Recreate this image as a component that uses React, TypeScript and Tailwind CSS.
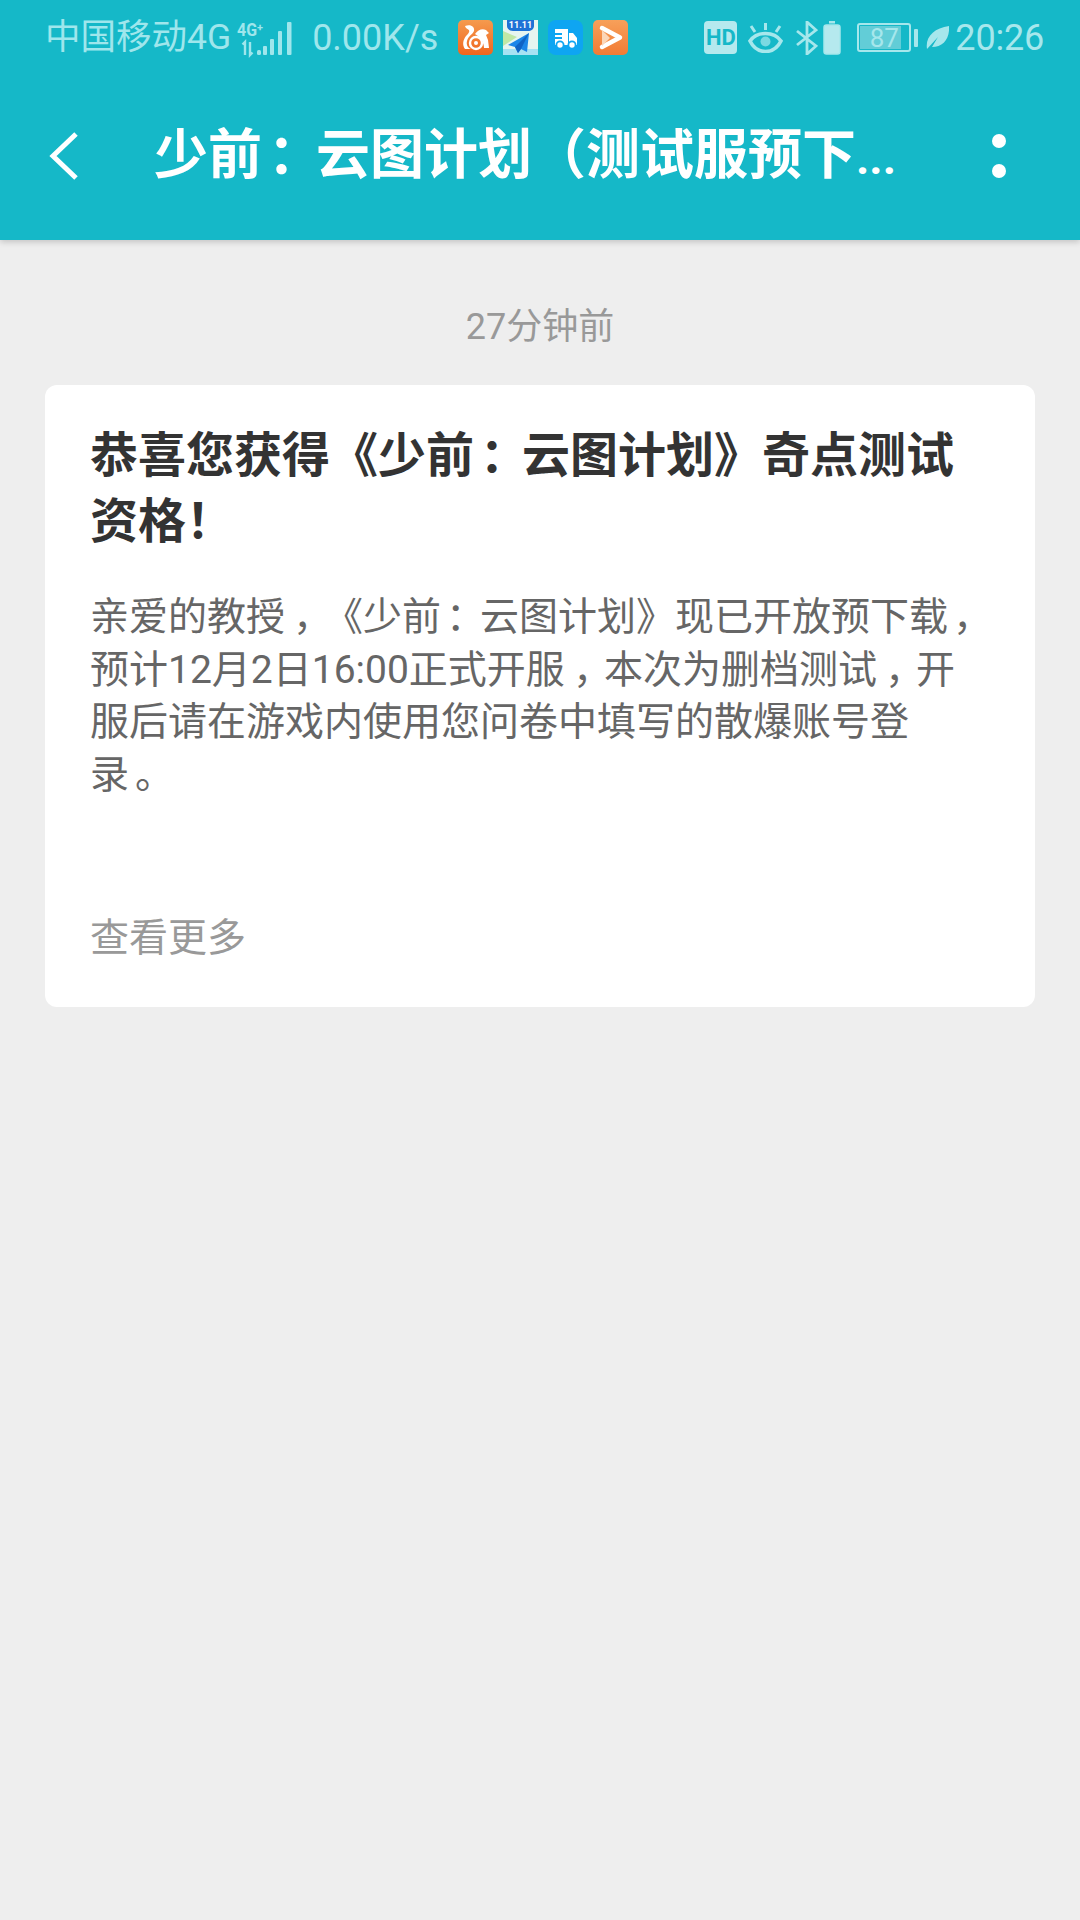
const cjk = "font-['Roboto','Noto_Sans_CJK_SC',sans-serif]"

// half-width glyph in a 1em cell, the reference font sits these marks further right than Noto does
function Mark({ children, className }: { children: string; className: string }) {
  return <span className={`inline-block w-[1em] [font-feature-settings:'halt'] ${className}`}>{children}</span>
}

function SignalIcon() {
  return (
    <svg width="60" height="36" viewBox="0 0 60 36" fill="currentColor" className="overflow-visible">
      <text x="0" y="16" fontSize="18" fontWeight="700" fontFamily="Roboto" textLength="20" lengthAdjust="spacingAndGlyphs">4G</text>
      <text x="20" y="11" fontSize="11" fontWeight="700" fontFamily="Roboto">+</text>
      <path d="M8 35V22l-2.5 2.5M13 22v13l2.5-2.5" fill="none" stroke="currentColor" strokeWidth="2.4" />
      <rect x="20" y="30" width="4" height="5" rx="1.5" />
      <rect x="26" y="26" width="4" height="9" rx="1" />
      <rect x="33" y="19" width="4" height="16" rx="1" />
      <rect x="41" y="11" width="4" height="24" rx="1" />
      <rect x="50" y="2" width="4.5" height="33" rx="1" />
    </svg>
  )
}

function UcIcon() {
  return (
    <svg width="35" height="35" viewBox="0 0 35 35">
      <defs>
        <linearGradient id="uc" x1="0" y1="0" x2="0" y2="1">
          <stop offset="0" stopColor="#f59a4e" />
          <stop offset="1" stopColor="#f0661e" />
        </linearGradient>
      </defs>
      <rect width="35" height="35" rx="5" fill="url(#uc)" />
      <path d="M7 6c6-2 10 1 9 5-1 3-6 5-7 10-1 4 1 7 4 8H7c-3-4-2-9 1-13 2-2 4-4 3-6-1-1-3-1-4-4z" fill="#fff" />
      <circle cx="18" cy="23" r="6" fill="none" stroke="#fff" strokeWidth="2.4" />
      <circle cx="18" cy="23" r="2" fill="#fff" />
      <path d="M17 14c3-4 7-6 11-4l3 3-3 2 2 5 1 8h-5c0-6-4-11-9-14z" fill="#fff" />
    </svg>
  )
}

function MapIcon() {
  return (
    <svg width="35" height="35" viewBox="0 0 35 35">
      <rect width="35" height="35" fill="#e6f5f0" />
      <path d="M4 0h27v6c0 3-3 5-6 5H10c-3 0-6-2-6-5z" fill="#1f72d6" />
      <text x="17.5" y="8" textAnchor="middle" fontSize="9" fontWeight="700" fill="#fff" fontFamily="Roboto">11.11</text>
      <path d="M0 11l14 6L0 26z" fill="#bfe8a6" />
      <rect y="29" width="35" height="6" fill="#a6e2f3" />
      <path d="M26 13L5 25l7 2 3 6 3-4 6 3z" fill="#1b86e8" />
      <path d="M26 13L12 27l3 6 3-4z" fill="#0f63c4" />
    </svg>
  )
}

function TruckIcon() {
  return (
    <svg width="35" height="35" viewBox="0 0 35 35">
      <rect width="35" height="35" rx="8" fill="#0ea5f2" />
      <path d="M7 9h13v16H7zM21 13h4l4 5v7h-8z" fill="#fff" />
      <path d="M5 14h9M7 18h7" stroke="#0ea5f2" strokeWidth="2" />
      <circle cx="12" cy="25" r="3.6" fill="#fff" stroke="#0ea5f2" strokeWidth="1.8" />
      <circle cx="24" cy="25" r="3.6" fill="#fff" stroke="#0ea5f2" strokeWidth="1.8" />
    </svg>
  )
}

function PlayIcon() {
  return (
    <svg width="35" height="35" viewBox="0 0 35 35">
      <defs>
        <linearGradient id="pl" x1="0" y1="0" x2="0" y2="1">
          <stop offset="0" stopColor="#f7a05a" />
          <stop offset="1" stopColor="#f27b34" />
        </linearGradient>
      </defs>
      <rect width="35" height="35" rx="5" fill="url(#pl)" />
      <path d="M9 8l18 9.5L9 27" fill="none" stroke="#fff" strokeWidth="4.5" strokeLinejoin="round" strokeLinecap="round" />
      <path d="M9 10v16l8-8z" fill="#fbd6b8" />
    </svg>
  )
}

function StatusRight() {
  return (
    <div className="flex items-center text-[#a6e7ec]">
      <div className="w-[33px] h-[33px] rounded-[4px] bg-[#b5e9ee] text-[#15b8c8] text-[22px] font-bold flex items-center justify-center leading-none">
        HD
      </div>
      <svg width="37" height="30" viewBox="0 0 37 30" fill="none" stroke="currentColor" strokeWidth="3.6" className="ml-[10px]">
        <path d="M3 18c7-10 24-10 31 0-7 14-24 14-31 0z" />
        <circle cx="18.5" cy="18.5" r="5" fill="currentColor" fillOpacity="0.7" stroke="none" />
        <path d="M18.5 0v7M4 3l4 6M33 3l-4 6" strokeWidth="3" />
      </svg>
      <svg width="22" height="34" viewBox="0 0 22 34" fill="none" stroke="currentColor" strokeWidth="2.8" className="ml-[12px]">
        <path d="M1 10l19 15-9 8V1l9 8L1 24" />
      </svg>
      <svg width="18" height="34" viewBox="0 0 18 34" className="ml-[5px]">
        <rect x="6" y="0" width="6" height="2.5" fill="currentColor" />
        <rect x="1" y="4" width="16" height="29" rx="2.5" fill="#b5e9ee" stroke="currentColor" strokeWidth="1.5" />
      </svg>
      <div className="ml-[16px] flex items-center">
        <div className="relative w-[54px] h-[29px] rounded-[3px] border-2 border-[#a6e7ec] text-[26px] leading-none flex items-center justify-center">
          <div className="absolute left-[1px] top-[1px] bottom-[1px] w-[41px] bg-[#62cdd7]" />
          <span className="relative">87</span>
        </div>
        <div className="ml-[3px] w-[4px] h-[18px] rounded-[1px] bg-[#a6e7ec]" />
      </div>
      <svg width="23" height="24" viewBox="0 0 23 24" fill="currentColor" className="ml-[8px]">
        <path d="M1 23C-1 11 8 2 23 0c1 13-6 21-17 21l6-10z" />
      </svg>
      <span className="ml-[6px] text-[36px] leading-none tracking-[-0.2px]">20:26</span>
    </div>
  )
}

export default function App() {
  return (
    <div className={`w-[1080px] h-[1920px] bg-[#eeeeee] [text-spacing-trim:space-all] ${cjk}`}>
      <header className="h-[240px] bg-[#15b8c8] shadow-[0_2px_6px_rgba(0,0,0,0.18)] relative">
        <div className="h-[72px] pt-[3px] pl-[45px] pr-[36px] flex items-center justify-between">
          <div className="flex items-center text-[#9fe6ec]">
            <span className="text-[35.5px] leading-none">中国移动4G</span>
            <span className="ml-[6px] text-[#9fe6ec]"><SignalIcon /></span>
            <span className="ml-[15px] text-[36px] leading-none">0.00K/s</span>
            <div className="ml-[20px] flex items-center gap-[10px]">
              <UcIcon />
              <MapIcon />
              <TruckIcon />
              <PlayIcon />
            </div>
          </div>
          <StatusRight />
        </div>
        <div className="h-[168px] flex items-center">
          <svg width="31" height="48" viewBox="0 0 31 48" fill="none" stroke="#fff" strokeWidth="5" className="ml-[48px]">
            <path d="M28 2L5 24l23 22" />
          </svg>
          <h1 className="ml-[75px] w-[838px] text-[54px] leading-none font-bold text-white whitespace-nowrap">
            少前<Mark className="pl-[6px]">：</Mark>云图计划（测试服预下<span className="text-[46px]">...</span>
          </h1>
          <div className="flex flex-col gap-[16px]">
            <div className="w-[14px] h-[14px] rounded-full bg-white" />
            <div className="w-[14px] h-[14px] rounded-full bg-white" />
          </div>
        </div>
      </header>

      <main className="px-[45px]">
        <p className="pt-[63px] h-[145px] text-center text-[36px] leading-[48px] text-[#999999]">27分钟前</p>
        <section className="h-[622px] bg-white rounded-[12px] px-[46px] pt-[38px]">
          <h2 className="text-[48px] leading-[66px] font-bold text-[#333333] -ml-[1px]">
            恭喜您获得《少前<Mark className="pl-[6px]">：</Mark>云图计划》奇点测试<br />资格！
          </h2>
          <p className="mt-[36px] text-[39px] leading-[52.5px] text-[#666666] -ml-[1px] whitespace-nowrap">
            亲爱的教授<Mark className="pl-[8px]">，</Mark>《少前<Mark className="pl-[5px]">：</Mark>云图计划》现已开放预下载<Mark className="pl-[5px]">，</Mark><br />
            预计12月2日16:00正式开服<Mark className="pl-[8px]">，</Mark>本次为删档测试<Mark className="pl-[8px]">，</Mark>开<br />
            服后请在游戏内使用您问卷中填写的散爆账号登<br />
            录<Mark className="pl-[6px]">。</Mark>
          </p>
          <p className="mt-[111px] text-[39px] leading-[52px] text-[#999999] -ml-[1px]">查看更多</p>
        </section>
      </main>
    </div>
  )
}
